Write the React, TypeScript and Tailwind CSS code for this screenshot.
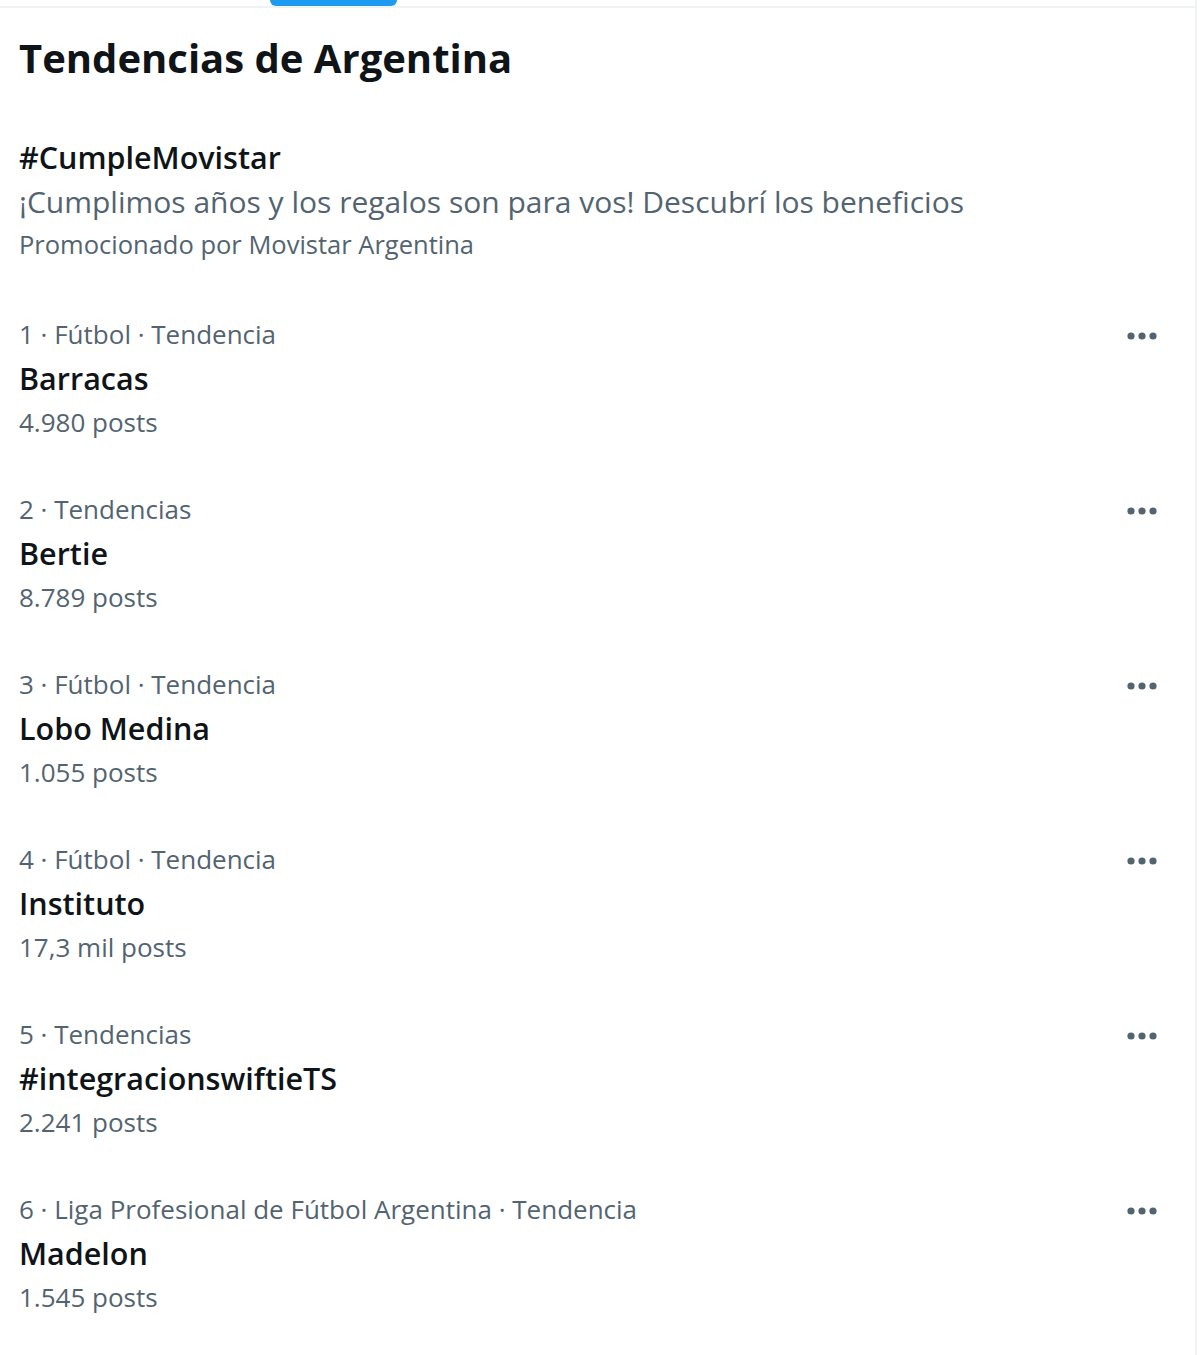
const trends = [
  { meta: "1 · Fútbol · Tendencia", name: "Barracas", posts: "4.980 posts" },
  { meta: "2 · Tendencias", name: "Bertie", posts: "8.789 posts" },
  { meta: "3 · Fútbol · Tendencia", name: "Lobo Medina", posts: "1.055 posts" },
  { meta: "4 · Fútbol · Tendencia", name: "Instituto", posts: "17,3 mil posts" },
  { meta: "5 · Tendencias", name: "#integracionswiftieTS", posts: "2.241 posts" },
  { meta: "6 · Liga Profesional de Fútbol Argentina · Tendencia", name: "Madelon", posts: "1.545 posts" },
];

function Dots() {
  return (
    <svg width="32" height="10" viewBox="0 0 32 10" className="text-[#536471]">
      <circle cx="5" cy="5" r="3.6" fill="currentColor" />
      <circle cx="16" cy="5" r="3.6" fill="currentColor" />
      <circle cx="27" cy="5" r="3.6" fill="currentColor" />
    </svg>
  );
}

export default function App() {
  return (
    <div
      className="w-[1200px] h-[1355px] bg-white overflow-hidden text-[#0f1419]"
      style={{ fontFamily: '"Open Sans", "Noto Sans", sans-serif' }}
    >
      <div className="h-full mr-[3px] border-r-2 border-[#eff3f4]">
        {/* tab strip */}
        <div className="h-[8px] border-b-2 border-[#eff3f4] pl-[270px]">
          <div className="w-[127px] h-[6px] rounded-b-full bg-[#1d9bf0]" />
        </div>

        <div className="px-[19px]">
          <h2 className="pt-[26px] text-[40px] leading-[48px] font-bold">
            Tendencias de Argentina
          </h2>

          {/* promoted */}
          <div className="pt-[53px] pb-[28px]">
            <div className="text-[30.5px] leading-[44px] font-semibold">#CumpleMovistar</div>
            <div className="text-[30px] leading-[46px] text-[#536471]">
              ¡Cumplimos años y los regalos son para vos! Descubrí los beneficios
            </div>
            <div className="text-[25.5px] leading-[38px] text-[#536471]">
              Promocionado por Movistar Argentina
            </div>
          </div>

          {trends.map((t) => (
            <div key={t.name} className="flex justify-between pt-[21px] pb-[22px]">
              <div>
                <div className="text-[26px] leading-[44px] text-[#536471]">{t.meta}</div>
                <div className="text-[30.5px] leading-[44px] font-semibold">{t.name}</div>
                <div className="text-[26px] leading-[44px] text-[#536471]">{t.posts}</div>
              </div>
              <div className="pt-[19px] pr-[18px]">
                <Dots />
              </div>
            </div>
          ))}
        </div>
      </div>
    </div>
  );
}
